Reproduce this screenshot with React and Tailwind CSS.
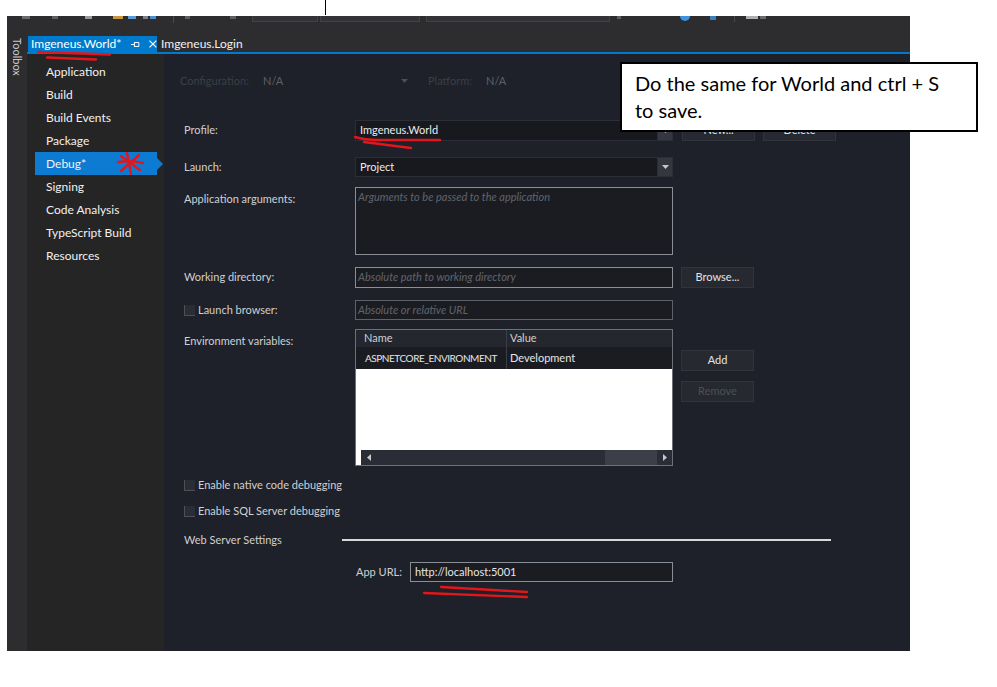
import React from 'react'

const sideItems = ['Application', 'Build', 'Build Events', 'Package', 'Debug*', 'Signing', 'Code Analysis', 'TypeScript Build', 'Resources']

const Btn = ({ children, disabled }) => (
  <div className={`w-[73px] h-[21px] flex items-center justify-center bg-[#262930] border border-[#31343b] text-[11px] ${disabled ? 'text-[#4c5058]' : 'text-[#e4e4e4]'}`}>
    {children}
  </div>
)

const Check = () => <span className="w-[11px] h-[11px] bg-[#2a2d34] border-l border-b border-[#4d5058] mr-[3px]" />

const DropArrow = () => (
  <div className="w-[15px] h-full flex items-center justify-center bg-[#34373f] border-l border-[#2a2d34]">
    <svg width="7" height="4" viewBox="0 0 7 4"><path d="M0 0h7L3.5 4z" fill="#c8c8c8" /></svg>
  </div>
)

const App = () => {
  return (
    <div className="relative w-[997px] h-[687px] bg-white overflow-hidden font-['Lato','Noto_Sans',sans-serif]">
      {/* white strip above the cropped window */}
      <div className="h-[16px] flex">
        <div className="ml-[325px] w-px h-[15px] bg-black" />
      </div>

      <div className="ml-[7px] w-[903px] h-[635px] bg-[#2d2d30] flex flex-col">
        {/* toolbar, cut off at the top */}
        <div className="h-[20px] flex items-start">
          <span className="ml-[15px] w-[8px] h-[3px] bg-[#6a6a6c]" />
          <span className="ml-[22px] w-[6px] h-[3px] bg-[#5e5e60]" />
          <span className="ml-[27px] w-[7px] h-[3px] bg-[#9a9a9c]" />
          <span className="ml-[21px] w-[10px] h-[3px] bg-[#c9983e]" />
          <span className="ml-[5px] w-[8px] h-[3px] bg-[#5b9bd5]" />
          <span className="ml-[7px] w-[5px] h-[3px] bg-[#808082]" />
          <span className="ml-[2px] w-[6px] h-[3px] bg-[#4f8fd0]" />
          <span className="ml-[17px] w-px h-[7px] bg-[#4a4a4d]" />
          <span className="ml-[11px] w-[5px] h-[3px] bg-[#5e5e60]" />
          <span className="ml-[40px] w-[6px] h-[3px] bg-[#5e5e60]" />
          <span className="ml-[16px] w-[66px] h-[6px] bg-[#333337] border-x border-b border-[#434346]" />
          <span className="ml-[2px] w-[100px] h-[6px] bg-[#333337] border-x border-b border-[#434346]" />
          <span className="ml-[6px] w-[184px] h-[6px] bg-[#333337] border-x border-b border-[#434346]" />
          <span className="ml-[7px] w-[4px] h-[3px] bg-[#5e5e60]" />
          <span className="ml-[59px] w-[10px] h-[5px] rounded-b-full bg-[#3f92e0]" />
          <span className="ml-[20px] w-[6px] h-[4px] bg-[#3a7fc2]" />
          <span className="ml-[18px] w-px h-[6px] bg-[#4a4a4d]" />
          <span className="ml-[11px] w-[12px] h-[3px] bg-[#b0b0b2]" />
          <span className="ml-[2px] w-[6px] h-[3px] bg-[#6a6a6c]" />
        </div>

        <div className="flex-1 flex">
          {/* toolbox strip */}
          <div className="w-[20px] flex justify-center pt-[2px]">
            <span className="[writing-mode:vertical-rl] text-[11px] text-[#c8c8c8] leading-none">Toolbox</span>
          </div>

          {/* document well */}
          <div className="flex-1 flex flex-col">
            <div className="h-[16px] flex items-stretch text-[12px]">
              <div className="ml-px w-[129px] bg-[#007acc] text-white flex items-center pl-[3px]">
                <span>Imgeneus.World*</span>
                <svg className="ml-[10px]" width="9" height="7" viewBox="0 0 9 7">
                  <path d="M0 3.5h3M3.5 1v5M3.5 1.5h4.5v4h-4.5" stroke="#fff" strokeWidth="1" fill="none" />
                </svg>
                <svg className="ml-[9px]" width="8" height="8" viewBox="0 0 8 8">
                  <path d="M0.5 0.5l7 7M7.5 0.5l-7 7" stroke="#fff" strokeWidth="1.2" />
                </svg>
              </div>
              <div className="ml-[4px] flex items-center text-[#f1f1f1]">Imgeneus.Login</div>
            </div>
            <div className="h-[2px] bg-[#007acc]" />

            <div className="flex-1 flex">
              {/* side nav */}
              <div className="w-[137px] bg-[#252526] pt-[6px] text-[12px] text-[#f1f1f1]">
                {sideItems.map(item => item === 'Debug*' ? (
                  <div key={item} className="h-[23px] flex items-center">
                    <div className="ml-[8px] w-[122px] h-full bg-[#0e7bd3] flex items-center pl-[11px]">{item}</div>
                    <svg width="7" height="12" viewBox="0 0 7 12"><path d="M0 0l6 6-6 6z" fill="#0e7bd3" /></svg>
                  </div>
                ) : (
                  <div key={item} className="h-[23px] flex items-center pl-[19px]">{item}</div>
                ))}
              </div>

              {/* debug page */}
              <div className="flex-1 bg-[#1e2129] pl-[20px] flex flex-col text-[11px] text-[#cfd0d3]">
                <div className="mt-[17px] h-[20px] -ml-[4px] flex items-center text-[#3b3f47]">
                  <span className="w-[83px]">Configuration:</span>
                  <div className="w-[145px] flex items-center justify-between">
                    <span className="text-[#5c6068]">N/A</span>
                    <svg width="7" height="4" viewBox="0 0 7 4"><path d="M0 0h7L3.5 4z" fill="#4a4e56" /></svg>
                  </div>
                  <span className="ml-[20px] w-[58px]">Platform:</span>
                  <span className="text-[#5c6068]">N/A</span>
                </div>

                <div className="mt-[29px] h-[21px] flex">
                  <div className="w-[171px] flex items-center">Profile:</div>
                  <div className="w-[318px] bg-[#17191e] border border-[#2b2e35] flex items-center">
                    <span className="flex-1 pl-[4px] text-[#ececec]">Imgeneus.World</span>
                    <DropArrow />
                  </div>
                  <div className="ml-[9px]"><Btn>New...</Btn></div>
                  <div className="ml-[8px]"><Btn>Delete</Btn></div>
                </div>

                <div className="mt-[16px] h-[20px] flex">
                  <div className="w-[171px] flex items-center">Launch:</div>
                  <div className="w-[318px] bg-[#17191e] border border-[#2b2e35] flex items-center">
                    <span className="flex-1 pl-[4px] text-[#ececec]">Project</span>
                    <DropArrow />
                  </div>
                </div>

                <div className="mt-[10px] h-[68px] flex">
                  <div className="w-[171px] pt-[4px]">Application arguments:</div>
                  <div className="w-[318px] bg-[#1a1c22] border border-[#8a8e96] px-[2px] pt-[1px] italic text-[#60646c]">Arguments to be passed to the application</div>
                </div>

                <div className="mt-[12px] h-[21px] flex">
                  <div className="w-[171px] flex items-center">Working directory:</div>
                  <div className="w-[318px] bg-[#1a1c22] border border-[#8a8e96] px-[2px] flex items-center italic text-[#60646c]">Absolute path to working directory</div>
                  <div className="ml-[8px]"><Btn>Browse...</Btn></div>
                </div>

                <div className="mt-[12px] h-[20px] flex">
                  <div className="w-[171px] flex items-center"><Check />Launch browser:</div>
                  <div className="w-[318px] bg-[#1a1c22] border border-[#5d6169] px-[2px] flex items-center italic text-[#60646c]">Absolute or relative URL</div>
                </div>

                <div className="mt-[9px] h-[137px] flex">
                  <div className="w-[171px] pt-[4px]">Environment variables:</div>
                  <div className="w-[318px] border border-[#6c7078] bg-white flex flex-col">
                    <div className="h-[17px] flex bg-[#24272e]">
                      <div className="w-[5px]" />
                      <div className="w-[146px] pl-[3px] flex items-center border-r border-[#3a3d44]">Name</div>
                      <div className="pl-[3px] flex items-center">Value</div>
                    </div>
                    <div className="h-[22px] flex bg-[#1a1c22] text-[#e6e6e6]">
                      <div className="w-[5px]" />
                      <div className="w-[146px] pl-[4px] flex items-center border-r border-[#3a3d44] whitespace-nowrap overflow-hidden text-[10px] tracking-[-0.45px]">ASPNETCORE_ENVIRONMENT</div>
                      <div className="pl-[3px] flex items-center">Development</div>
                    </div>
                    <div className="flex-1" />
                    <div className="h-[15px] flex">
                      <div className="w-[5px]" />
                      <div className="flex-1 bg-[#2a2d35] flex items-center">
                        <div className="w-[16px] flex justify-center">
                          <svg width="4" height="7" viewBox="0 0 4 7"><path d="M4 0v7L0 3.5z" fill="#c8c8c8" /></svg>
                        </div>
                        <div className="ml-[228px] w-[52px] h-full bg-[#3c3f48]" />
                        <div className="flex-1 flex justify-center">
                          <svg width="4" height="7" viewBox="0 0 4 7"><path d="M0 0v7L4 3.5z" fill="#c8c8c8" /></svg>
                        </div>
                      </div>
                    </div>
                  </div>
                  <div className="ml-[8px] pt-[21px] flex flex-col gap-[10px]">
                    <Btn>Add</Btn>
                    <Btn disabled>Remove</Btn>
                  </div>
                </div>

                <div className="mt-[9px] h-[20px] flex items-center"><Check />Enable native code debugging</div>
                <div className="mt-[6px] h-[20px] flex items-center"><Check />Enable SQL Server debugging</div>

                <div className="mt-[9px] h-[20px] flex items-center">
                  <span className="w-[158px]">Web Server Settings</span>
                  <span className="w-[489px] h-[2px] bg-[#d8d8d8]" />
                </div>

                <div className="mt-[12px] h-[20px] flex">
                  <div className="ml-[172px] w-[54px] flex items-center">App URL:</div>
                  <div className="w-[263px] bg-[#1a1c22] border border-[#8a8e96] px-[4px] flex items-center text-[#e6e6e6]">http://localhost:5001</div>
                </div>
              </div>
            </div>
          </div>
        </div>
      </div>

      {/* red pen annotations */}
      <svg className="absolute left-0 top-0 pointer-events-none" width="997" height="687" viewBox="0 0 997 687">
        <g stroke="#e3161b" strokeWidth="2.4" strokeLinecap="round" fill="none">
          <path d="M38 52 Q70 53 110 54.5" />
          <path d="M47 57.5 Q70 58.5 96 59.5" />
          <path d="M127 153 L131 174" />
          <path d="M118 162 Q130 160 143 163" />
          <path d="M121 156 L140 170" />
          <path d="M139 155 L121 171" />
          <path d="M355 137 Q364 140 380 140 L440 140" />
          <path d="M364 142 L411 148" />
          <path d="M441 587 L527 592" />
          <path d="M424 593 L527 597" />
        </g>
      </svg>

      {/* callout */}
      <div className="absolute left-[620px] top-[62px] w-[358px] h-[70px] bg-white border-2 border-black pl-[13px] pt-[6px] text-[20px] leading-[27px] text-black font-['Lato','Open_Sans',sans-serif]">
        Do the same for World and ctrl + S<br />to save.
      </div>
    </div>
  )
}

export default App
